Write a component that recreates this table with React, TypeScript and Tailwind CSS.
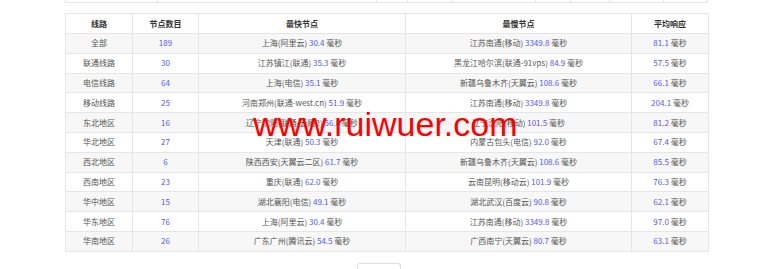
import React from 'react'

// 各线路测速汇总
const rows = [
  ['全部', '189', '上海(阿里云)', '30.4', '江苏南通(移动)', '3349.8', '81.1'],
  ['联通线路', '30', '江苏镇江(联通)', '35.3', '黑龙江哈尔滨(联通-91vps)', '84.9', '57.5'],
  ['电信线路', '64', '上海(电信)', '35.1', '新疆乌鲁木齐(天翼云)', '108.6', '66.1'],
  ['移动线路', '25', '河南郑州(联通-west.cn)', '51.9', '江苏南通(移动)', '3349.8', '204.1'],
  ['东北地区', '16', '辽宁沈阳(联通-云瞳2)', '56.8', '辽宁沈阳(移动)', '101.5', '81.2'],
  ['华北地区', '27', '天津(联通)', '50.3', '内蒙古包头(电信)', '92.0', '67.4'],
  ['西北地区', '6', '陕西西安(天翼云二区)', '61.7', '新疆乌鲁木齐(天翼云)', '108.6', '85.5'],
  ['西南地区', '23', '重庆(联通)', '62.0', '云南昆明(移动云)', '101.9', '76.3'],
  ['华中地区', '15', '湖北襄阳(电信)', '49.1', '湖北武汉(百度云)', '90.8', '62.1'],
  ['华东地区', '76', '上海(阿里云)', '30.4', '江苏南通(移动)', '3349.8', '97.0'],
  ['华南地区', '26', '广东广州(腾讯云)', '54.5', '广西南宁(天翼云)', '80.7', '63.1'],
]

// 上一张表只露出底边
const topCols = [92, 219, 32, 44, 84, 35, 39, 54, 44]

function Ms({ v }: { v: string }) {
  return (
    <>
      <span className="text-[#5757f2]">{v}</span> 毫秒
    </>
  )
}

export default function App() {
  return (
    <div className="w-[780px] h-[269px] overflow-hidden bg-white text-[8px] text-[#555] font-['Noto_Sans_CJK_SC',sans-serif]">
      <div className="ml-[65px] w-[643px]">
        <div className="flex h-[3px] border-b border-[#e6e6e6] border-l">
          {topCols.map((w, i) => (
            <div key={i} style={{ width: w }} className="border-r border-[#e6e6e6]" />
          ))}
        </div>

        <div className="relative mt-[10px]">
          <table className="w-[643px] table-fixed border-collapse text-center">
            <colgroup>
              <col className="w-[67px]" />
              <col className="w-[66px]" />
              <col className="w-[207px]" />
              <col className="w-[226px]" />
              <col className="w-[77px]" />
            </colgroup>
            <thead>
              <tr className="h-[20px] text-[#333] font-bold">
                <th className="border border-[#e6e6e6] p-0">线路</th>
                <th className="border border-[#e6e6e6] p-0">节点数目</th>
                <th className="border border-[#e6e6e6] p-0">最快节点</th>
                <th className="border border-[#e6e6e6] p-0">最慢节点</th>
                <th className="border border-[#e6e6e6] p-0">平均响应</th>
              </tr>
            </thead>
            <tbody>
              {rows.map((r, i) => (
                <tr key={i} className={i % 2 === 0 ? 'h-[19.8px] bg-[#f7f7f7]' : 'h-[19.8px] bg-white'}>
                  <td className="border border-[#e6e6e6] p-0">{r[0]}</td>
                  <td className="border border-[#e6e6e6] p-0 text-[#5757f2]">{r[1]}</td>
                  <td className="border border-[#e6e6e6] p-0 whitespace-nowrap">
                    {r[2]} <Ms v={r[3]} />
                  </td>
                  <td className="border border-[#e6e6e6] p-0 whitespace-nowrap">
                    {r[4]} <Ms v={r[5]} />
                  </td>
                  <td className="border border-[#e6e6e6] p-0">
                    <Ms v={r[6]} />
                  </td>
                </tr>
              ))}
            </tbody>
          </table>

          {/* 水印 */}
          <div className="absolute left-[188px] top-[94px] leading-none text-[34px] text-[#ff0000] font-['Liberation_Sans',Arial,sans-serif] pointer-events-none whitespace-nowrap">
            www.ruiwuer.com
          </div>
        </div>

        <div className="flex mt-[11px]">
          <button className="ml-[292px] w-[44px] h-[20px] border border-[#ddd] rounded-[3px] bg-white text-[8px] text-[#555]">
            上一页
          </button>
        </div>
      </div>
    </div>
  )
}
